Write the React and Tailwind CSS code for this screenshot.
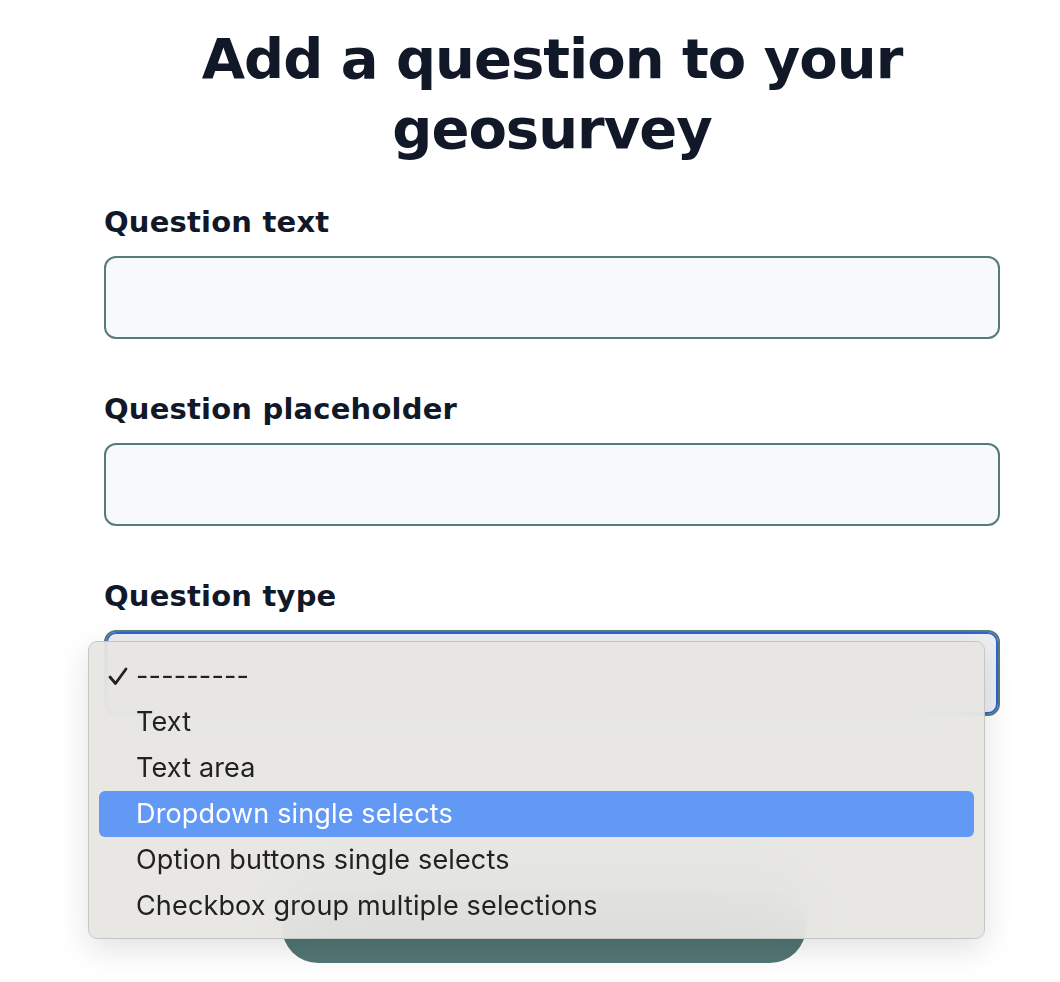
import { useState } from "react";

const OPTIONS = [
  { label: "---------", checked: true },
  { label: "Text" },
  { label: "Text area" },
  { label: "Dropdown single selects", active: true },
  { label: "Option buttons single selects" },
  { label: "Checkbox group multiple selections" },
];

function Field({ label, children }) {
  return (
    <div className="flex flex-col">
      <label className="text-[29px] leading-[34px] font-bold text-[#111827] mb-[17px] [font-family:'DejaVu_Sans',sans-serif] tracking-[0.2px]">
        {label}
      </label>
      {children}
    </div>
  );
}

export default function App() {
  const [text, setText] = useState("");
  const [placeholder, setPlaceholder] = useState("");

  return (
    <div className="min-h-screen bg-white [font-family:'Inter',sans-serif]">
      <div className="ml-[104px] w-[896px] pt-[24px] pb-[19px]">
        <h1 className="text-center text-[56px] leading-[70px] font-bold text-[#111827] [font-family:'DejaVu_Sans',sans-serif] tracking-[-1px] mb-[41px]">
          Add a question to your<br />geosurvey
        </h1>

        <div className="flex flex-col gap-[53px]">
          <Field label="Question text">
            <input
              value={text}
              onChange={(e) => setText(e.target.value)}
              className="h-[83px] rounded-[12px] border-2 border-[#557c79] bg-[#f8f9fb] px-5 text-[26px] outline-none"
            />
          </Field>

          <Field label="Question placeholder">
            <input
              value={placeholder}
              onChange={(e) => setPlaceholder(e.target.value)}
              className="h-[83px] rounded-[12px] border-2 border-[#557c79] bg-[#f8f9fb] px-5 text-[26px] outline-none"
            />
          </Field>

          <Field label="Question type">
            <div className="relative">
              <div className="h-[86px] rounded-[12px] border-2 border-[#557c79] bg-[#eceef1] ring-2 ring-inset ring-[#2f63da]" />

              {/* native select menu, opened */}
              <div className="absolute left-[-16px] top-[11px] z-10 w-[897px] rounded-[9px] border border-[#c6c6c6] bg-[#e6e5e2]/93 backdrop-blur-2xl shadow-[0_10px_32px_rgba(0,0,0,0.12)] pt-[11px] pb-[9px] px-[10px]">
                {OPTIONS.map((o) => (
                  <div
                    key={o.label}
                    className={
                      "h-[46px] flex items-center rounded-[6px] text-[27px] tracking-[0.15px] " +
                      (o.active ? "bg-[#6199f5] text-white" : "text-[#222222]")
                    }
                  >
                    <span className="w-[37px] shrink-0 flex justify-end pr-[8px]">
                      {o.checked && (
                        <svg width="20" height="19" viewBox="0 0 20 19" fill="none">
                          <path d="M2 10 L7.5 16.5 L18 2" stroke="#222" strokeWidth="2.8" strokeLinecap="round" strokeLinejoin="round" />
                        </svg>
                      )}
                    </span>
                    <span>{o.label}</span>
                  </div>
                ))}
              </div>
            </div>
          </Field>
        </div>

        <button className="mt-[175px] ml-[178px] block w-[524px] h-[72px] rounded-full bg-[#527774]" aria-label="Add question" />
      </div>
    </div>
  );
}
